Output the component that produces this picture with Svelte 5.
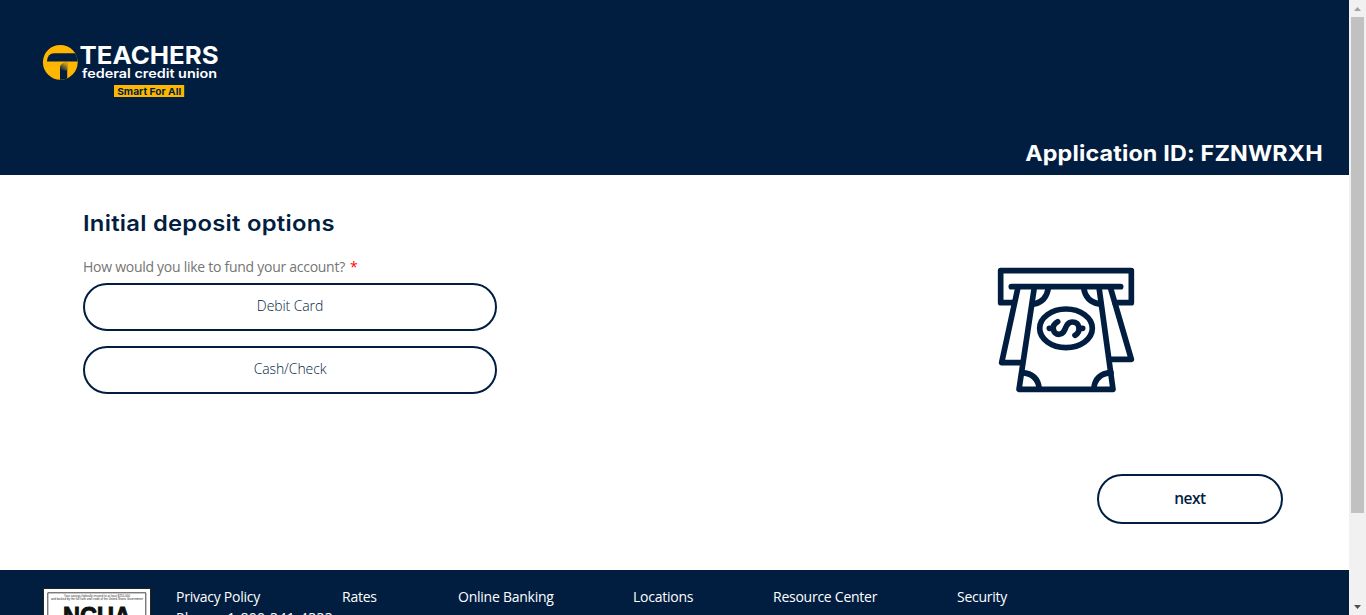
<script>
  const options = ['Debit Card', 'Cash/Check'];
  const links = [
    ['Privacy Policy', 86],
    ['Rates', 36],
    ['Online Banking', 95],
    ['Locations', 60],
    ['Resource Center', 104],
    ['Security', 52]
  ];
</script>

<div class="window">
  <div class="page">
    <header>
      <svg class="logo" width="200" height="70" viewBox="0 0 200 70" role="img" aria-label="Teachers federal credit union">
        <defs>
          <linearGradient id="fold" x1="0" y1="1" x2="0.6" y2="0">
            <stop offset="0.1" stop-color="#011e41" />
            <stop offset="1" stop-color="#dca315" />
          </linearGradient>
          <clipPath id="disc"><circle cx="30.3" cy="27.3" r="17.4" /></clipPath>
        </defs>
        <g clip-path="url(#disc)">
          <rect x="12" y="9" width="37" height="37" fill="#ffb600" />
          <path d="M17 26 Q17.8 18.3 24 18.3 H50 V26.4 H17Z" fill="#011e41" />
          <path d="M30 46 V33 Q30.3 28 37.2 27.5 V46Z" fill="#011e41" />
          <path d="M30 35.5 V33 Q30.5 27.5 37.2 27 V35.5Z" fill="url(#fold)" />
        </g>
        <text class="brand" x="49.6" y="28.6" font-size="24.5" textLength="139" lengthAdjust="spacingAndGlyphs">TEACHERS</text>
        <text class="union" x="52" y="42.8" font-size="12.8" textLength="135" lengthAdjust="spacingAndGlyphs">federal credit union</text>
        <rect x="84" y="50" width="70.2" height="12" fill="#ffb600" />
        <text class="tag" x="87.2" y="59.7" font-size="9.5" textLength="64" lengthAdjust="spacingAndGlyphs">Smart For All</text>
      </svg>
      <h2>Application ID: FZNWRXH</h2>
    </header>

    <main>
      <section class="form">
        <h1>Initial deposit options</h1>
        <p class="label"><span class="question">How would you like to fund your account?</span><span class="req">*</span></p>
        {#each options as option}
          <button class="option">{option}</button>
        {/each}
      </section>
      <aside>
        <svg class="cash" width="160" height="150" viewBox="0 0 480 450" fill="none" stroke="#011e41" stroke-width="17" stroke-linecap="round" stroke-linejoin="round">
          <path d="M86 143 H47 V47 H439 V143 H390" />
          <path d="M79 95 H407" />
          <path d="M99 97 L50 323 H109" />
          <path d="M376 97 L439 313 H380" />
          <path d="M148 97 L102 403 H384 L342 97" />
          <path d="M190 99 Q184 139 148 147 M296 99 Q302 139 342 147" />
          <path d="M111 353 Q158 356 163 402 M378 353 Q331 356 326 402" />
          <ellipse cx="243" cy="220" rx="79" ry="58" />
          <path d="M218 200 C197 211 203 238 222 238 C246 238 236 201 262 201 C285 201 289 229 270 241 M193 220 H204 M284 220 H293" />
        </svg>
        <button class="next">next</button>
      </aside>
    </main>

    <footer>
      <svg class="ncua" width="108" height="60" viewBox="0 0 108 60">
        <rect x="0.5" y="0.5" width="107" height="60" fill="#fff" stroke="#222" />
        <path d="M4.8 60 V4.8 H102.8 V60" fill="none" stroke="#444" stroke-width="1" />
        <text x="21" y="8.9" font-size="2.8" textLength="66">Your savings federally insured to at least $250,000</text>
        <text x="8" y="12.4" font-size="2.8" textLength="92">and backed by the full faith and credit of the United States Government</text>
        <text class="mark" x="20" y="37" font-size="26.5" textLength="68" lengthAdjust="spacingAndGlyphs">NCUA</text>
      </svg>
      <div class="info">
        <nav>
          {#each links as [name, width]}
            <a href="#top" style="width: {width}px">{name}</a>
          {/each}
        </nav>
        <p class="phone">Phone: 1-800-341-4333</p>
      </div>
    </footer>
  </div>

  <div class="scrollbar">
    <svg width="17" height="17" viewBox="0 0 17 17"><path d="M5 11 L8.5 7 L12 11Z" fill="#a3a3a3" /></svg>
    <div class="thumb"></div>
    <svg class="down" width="17" height="17" viewBox="0 0 17 17"><path d="M5 7 H12 L8.5 11Z" fill="#505050" /></svg>
  </div>
</div>

<style>
  :global(body) { margin: 0; overflow: hidden; }
  .window { display: flex; width: 1366px; height: 615px; overflow: hidden; background: #fff; font-family: "Open Sans", sans-serif; }
  .page { width: 1349px; height: 615px; overflow: hidden; }
  header { height: 175px; box-sizing: border-box; padding: 35px 26px 0 30px; background: #011e41; color: #fff; display: flex; flex-direction: column; }
  h1, h2, p { margin: 0; white-space: nowrap; }
  h2 { align-self: flex-end; margin-top: 34px; font: 700 22px/28px Inter, sans-serif; letter-spacing: 0.15px; transform: scaleX(1.06); transform-origin: right; }
  .logo text { font-family: Inter, sans-serif; font-weight: 600; fill: #fff; }
  .logo .brand { font-weight: 700; }
  .logo .tag { fill: #011e41; font-weight: 700; }
  main { display: flex; justify-content: space-between; height: 395px; box-sizing: border-box; padding: 34px 66px 0 83px; color: #011e41; }
  .form { width: 414px; }
  h1 { font: 600 22px/28px Inter, sans-serif; letter-spacing: 0.25px; transform: scaleX(1.08); transform-origin: left; }
  .label { display: flex; gap: 5px; margin-top: 20px; margin-bottom: 6px; font-size: 14px; line-height: 20px; color: #757575; }
  .question { width: 262px; letter-spacing: -0.27px; }
  .req { color: #f00; }
  button { box-sizing: border-box; display: block; border: 2px solid #011e41; border-radius: 25px; background: #fff; color: #011e41; font-family: "Open Sans", sans-serif; padding: 0; }
  .option { width: 414px; height: 48px; margin: 0 0 15px; font-size: 14px; font-weight: 350; letter-spacing: -0.1px; padding-bottom: 3px; }
  aside { width: 298px; display: flex; flex-direction: column; align-items: flex-end; padding-top: 46px; }
  .cash { align-self: flex-start; }
  .next { width: 186px; height: 50px; margin-top: 69px; font-size: 15.5px; font-weight: 550; letter-spacing: -0.5px; padding-bottom: 2px; }
  footer { display: flex; height: 90px; padding: 18px 0 0 43px; gap: 25px; background: #011e41; color: #fff; font-size: 14px; line-height: 20px; }
  .ncua { flex: none; }
  .ncua text { font-family: "Liberation Sans", sans-serif; fill: #222; }
  .ncua .mark { font-weight: 700; fill: #111; stroke: #111; stroke-width: 1; }
  nav { display: flex; gap: 80px; }
  a { color: #fff; text-decoration: none; white-space: nowrap; letter-spacing: -0.25px; }
  .info { margin-top: -1px; }
  .phone { margin-top: 1px; letter-spacing: 0.3px; }
  .scrollbar { width: 17px; height: 615px; background: #f1f1f1; display: flex; flex-direction: column; }
  .scrollbar svg { display: block; flex: none; }
  .thumb { width: 13px; height: 496px; margin-left: 2px; background: #c1c1c1; }
  .down { margin-top: auto; }
</style>
